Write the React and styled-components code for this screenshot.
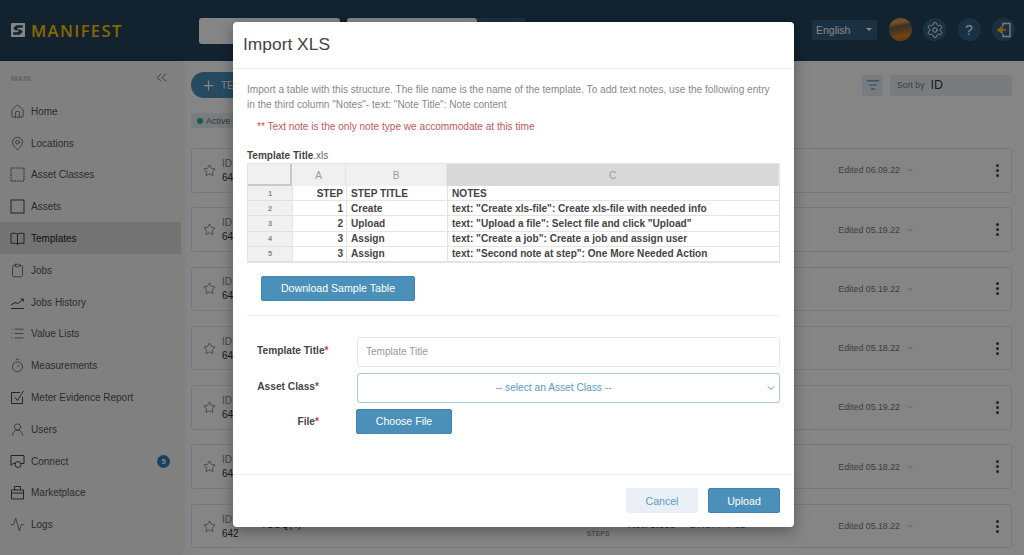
import React from 'react';
import styled, {createGlobalStyle} from 'styled-components';
import {
    House, MapPin, Clipboard, List, Timer, UserRound, Activity, ChevronsLeft, Plus, Star,
    ChevronDown, Settings, ListFilter,
} from 'lucide-react';

const Glyph = ({children}) => (
    <svg width="15" height="15" viewBox="0 0 15 15" fill="none" stroke="currentColor" strokeWidth="0.9">
        {children}
    </svg>
);

const DashedBox = () => <Glyph><rect x="1" y="1" width="13" height="13" strokeDasharray="1.6 1"/></Glyph>;
const PlainBox = () => <Glyph><rect x="1" y="1" width="13" height="13"/></Glyph>;
const OpenBook = () => <Glyph><path d="M7.5 3C6 2 3 2 1 2.500V12.500C3 12 6 12 7.500 13 9 12 12 12 14 12.500V2.500C12 2 9 2 7.500 3ZM7.500 3V14"/></Glyph>;
const History = () => <Glyph><path d="M1 10 5 7.500 8 8.500 13 4.500M10.500 4H13.500V6.500M1 13.500H14"/></Glyph>;
const MeterCheck = () => <Glyph><path d="M12.500 7V13.500H1.500V2.500H10M5 7.500 7.500 10.500 13.500 1"/></Glyph>;
const Bubbles = () => <Glyph><path d="M1 1.500H14V9.500H11M5 9.500H3L1 11.500V1.500"/><circle cx="8" cy="10.500" r="3"/></Glyph>;
const Case = () => <Glyph><path d="M1.500 5H13.500V14H1.500ZM1.500 8H13.500M4.500 5V1.500H10.500V5"/></Glyph>;

const NAV = [
    {label: 'Home', icon: House},
    {label: 'Locations', icon: MapPin},
    {label: 'Asset Classes', icon: DashedBox},
    {label: 'Assets', icon: PlainBox},
    {label: 'Templates', icon: OpenBook, active: true},
    {label: 'Jobs', icon: Clipboard},
    {label: 'Jobs History', icon: History},
    {label: 'Value Lists', icon: List},
    {label: 'Measurements', icon: Timer},
    {label: 'Meter Evidence Report', icon: MeterCheck},
    {label: 'Users', icon: UserRound},
    {label: 'Connect', icon: Bubbles, badge: 5},
    {label: 'Marketplace', icon: Case},
    {label: 'Logs', icon: Activity},
];

const ROWS = [
    {date: '06.09.22'},
    {date: '05.19.22'},
    {date: '05.19.22'},
    {date: '05.18.22'},
    {date: '05.19.22'},
    {date: '05.18.22'},
    {date: '05.18.22', title: 'TSOQ(4)', steps: 12, rev: 'Rev. 3.000', owner: 'DROPPY 02'},
];

const SHEET = [
    ['1', 'STEP', 'STEP TITLE', 'NOTES'],
    ['2', '1', 'Create', 'text: "Create xls-file": Create xls-file with needed info'],
    ['3', '2', 'Upload', 'text: "Upload a file": Select file and click "Upload"'],
    ['4', '3', 'Assign', 'text: "Create a job": Create a job and assign user'],
    ['5', '3', 'Assign', 'text: "Second note at step": One More Needed Action'],
];

const App = () => (
    <>
        <GlobalStyle/>
        <Page>
            <Header>
                <Logo>
                    <LogoMark viewBox="0 0 16 16">
                        <rect width="16" height="16" rx="1" fill="#fff"/>
                        <path d="M13.500 2.500H6L2.500 6 5 8.500H9.500L7.500 10.500H2.500V13.500H10L13.500 10 11 7.500H6.500L8.500 5.500H13.500Z" fill="#24415a"/>
                    </LogoMark>
                    MANIFEST
                </Logo>
                <HeaderSearch>
                    <SearchField $width={141}/>
                    <SearchField $width={130}/>
                    <SearchButton/>
                </HeaderSearch>
                <HeaderRight>
                    <LangSelect>English<Caret/></LangSelect>
                    <Avatar/>
                    <RoundButton><Settings size={18} strokeWidth={1.3}/></RoundButton>
                    <RoundButton>?</RoundButton>
                    <RoundButton>
                        <svg width="18" height="18" viewBox="0 0 18 18" fill="none">
                            <path d="M8 5V2.500H15V15.500H8V13" stroke="#f0f0f0" strokeWidth="1.4"/>
                            <path d="M11 9H5M7 6 3 9 7 12Z" stroke="#ffb020" strokeWidth="1.6" fill="#ffb020"/>
                        </svg>
                    </RoundButton>
                </HeaderRight>
            </Header>
            <Body>
                <Sidebar>
                    <SideTop>
                        <SideTitle>MAIN</SideTitle>
                        <ChevronsLeft size={17} strokeWidth={1}/>
                    </SideTop>
                    {NAV.map(({label, icon: Icon, active, badge}) => (
                        <NavItem key={label} $active={active}>
                            <IconSlot><Icon size={15} strokeWidth={1}/></IconSlot>
                            <span>{label}</span>
                            {badge && <Badge>{badge}</Badge>}
                        </NavItem>
                    ))}
                </Sidebar>
                <Main>
                    <Toolbar>
                        <AddButton><Plus size={15}/>TEMPLATE</AddButton>
                        <FilterButton><ListFilter size={14} color="#4a90b8"/></FilterButton>
                        <SortBox><small>Sort by</small>ID</SortBox>
                    </Toolbar>
                    <ActiveTag><Dot/>Active</ActiveTag>
                    <Rows>
                        {ROWS.map(({date, title, steps, rev, owner}, i) => (
                            <Row key={i}>
                                <Star size={13} strokeWidth={1}/>
                                <IdCell><span>ID</span><b>642</b></IdCell>
                                {title && (
                                    <>
                                        <RowTitle>{title}</RowTitle>
                                        <Steps><b>{steps}</b><span>STEPS</span></Steps>
                                        <Revision>{rev}</Revision>
                                        <Owner>{owner}</Owner>
                                    </>
                                )}
                                <Edited>Edited {date}<ChevronDown size={10} strokeWidth={1.2}/></Edited>
                                <MenuDots><i/><i/><i/></MenuDots>
                            </Row>
                        ))}
                    </Rows>
                </Main>
            </Body>
            <Overlay>
                <Modal>
                    <ModalTitle>Import XLS</ModalTitle>
                    <ModalBody>
                        <Intro>
                            Import a table with this structure. The file name is the name of the template. To add text notes, use the following entry
                            in the third column "Notes"- text: "Note Title": Note content
                        </Intro>
                        <Warning>** Text note is the only note type we accommodate at this time</Warning>
                        <FileName><b>Template Title</b>.xls</FileName>
                        <Sheet>
                            <Corner/>
                            <ColHead>A</ColHead>
                            <ColHead>B</ColHead>
                            <ColHead $selected>C</ColHead>
                            {SHEET.map(([n, step, title, notes]) => (
                                <React.Fragment key={n}>
                                    <RowHead>{n}</RowHead>
                                    <Cell $right>{step}</Cell>
                                    <Cell>{title}</Cell>
                                    <Cell>{notes}</Cell>
                                </React.Fragment>
                            ))}
                        </Sheet>
                        <DownloadButton>Download Sample Table</DownloadButton>
                        <Divider/>
                        <Form>
                            <Label>Template Title<Req>*</Req></Label>
                            <TextInput placeholder="Template Title"/>
                            <Label>Asset Class<Req>*</Req></Label>
                            <SelectBox>
                                -- select an Asset Class --
                                <SelectChevron><ChevronDown size={12} strokeWidth={2}/></SelectChevron>
                            </SelectBox>
                            <Label $low>File<Req>*</Req></Label>
                            <ChooseButton>Choose File</ChooseButton>
                        </Form>
                    </ModalBody>
                    <ModalFooter>
                        <CancelButton>Cancel</CancelButton>
                        <UploadButton>Upload</UploadButton>
                    </ModalFooter>
                </Modal>
            </Overlay>
        </Page>
    </>
);

export default App;

const GlobalStyle = createGlobalStyle`
    html, body {
        margin: 0;
        padding: 0;
        overflow: hidden;
    }
    * {
        box-sizing: border-box;
    }
    body {
        font-family: "Liberation Sans", Arial, sans-serif;
    }
`;

const Page = styled.div`
    position: relative;
    width: 1024px;
    height: 555px;
    overflow: hidden;
    background: #fff;
`;

const Header = styled.div`
    display: flex;
    align-items: center;
    height: 61px;
    padding: 0 9px 0 11px;
    background: #24415a;
`;

const Logo = styled.div`
    display: flex;
    align-items: center;
    gap: 6px;
    width: 188px;
    margin-top: -1px;
    color: #ffc800;
    font-family: "Open Sans", sans-serif;
    font-size: 16.5px;
    font-weight: 600;
    letter-spacing: 1.4px;
`;

const LogoMark = styled.svg`
    width: 14px;
    height: 14px;
`;

const HeaderSearch = styled.div`
    display: flex;
    gap: 7px;
`;

const SearchField = styled.div`
    width: ${p => p.$width}px;
    height: 26px;
    border-radius: 3px;
    background: #fff;
`;

const SearchButton = styled.div`
    width: 48px;
    height: 26px;
    margin-left: -7px;
    background: #32617f;
`;

const HeaderRight = styled.div`
    display: flex;
    align-items: center;
    gap: 11.5px;
    margin-left: auto;
    margin-top: -2px;
`;

const LangSelect = styled.div`
    display: flex;
    align-items: center;
    justify-content: space-between;
    width: 65px;
    height: 20px;
    padding: 0 5px 0 4px;
    border-radius: 2px;
    background: #325f82;
    color: #fff;
    font-size: 10.5px;
`;

const Caret = styled.i`
    border-left: 3px solid transparent;
    border-right: 3px solid transparent;
    border-top: 3px solid #fff;
`;

const Avatar = styled.div`
    width: 23px;
    height: 23px;
    border-radius: 50%;
    background: linear-gradient(170deg, #e09a45 0 22%, #6d5f4c 38%, #8a6a40 52%, #d27f2a 75%, #b36a1e 100%);
`;

const RoundButton = styled.div`
    display: flex;
    align-items: center;
    justify-content: center;
    width: 23px;
    height: 23px;
    border-radius: 50%;
    background: #325f82;
    color: #fff;
    font-size: 14px;
`;

const Body = styled.div`
    display: flex;
    height: 494px;
`;

const Sidebar = styled.div`
    flex: none;
    width: 181px;
    padding-top: 6px;
    background: #f6f6f6;
    box-shadow: 2px 0 5px rgba(0, 0, 0, .07);
`;

const SideTop = styled.div`
    display: flex;
    align-items: center;
    justify-content: space-between;
    height: 20px;
    margin-bottom: 8px;
    padding: 0 11px 0 11px;
    color: #333;
`;

const SideTitle = styled.div`
    margin-top: 3px;
    color: #bbb;
    font-size: 7.8px;
    font-weight: 700;
`;

const NavItem = styled.div`
    display: flex;
    align-items: center;
    gap: 5px;
    height: 31.8px;
    padding: 1px 11px 0 10px;
    background: ${p => p.$active ? '#dcdcdc' : 'transparent'};
    color: ${p => p.$active ? '#222' : '#555'};
    font-size: 10px;
`;

const IconSlot = styled.span`
    display: flex;
    flex: none;
    width: 16px;
    color: #333;
`;

const Badge = styled.span`
    display: flex;
    align-items: center;
    justify-content: center;
    width: 13px;
    height: 13px;
    margin-left: auto;
    border-radius: 50%;
    background: #2f80b8;
    color: #fff;
    font-size: 7.5px;
    font-weight: 700;
`;

const Main = styled.div`
    flex: 1;
    min-width: 0;
    padding: 11px 12px 0 10px;
`;

const Toolbar = styled.div`
    display: flex;
    align-items: center;
    height: 26px;
`;

const AddButton = styled.div`
    display: flex;
    align-items: center;
    gap: 5px;
    width: 120px;
    height: 26px;
    padding-left: 10px;
    border-radius: 13px;
    background: #4a90b8;
    color: #fff;
    font-size: 10px;
`;

const FilterButton = styled.div`
    display: flex;
    align-items: center;
    justify-content: center;
    width: 21px;
    height: 21px;
    margin-left: auto;
    border-radius: 2px;
    background: #e6eef4;
`;

const SortBox = styled.div`
    display: flex;
    align-items: center;
    gap: 6px;
    width: 122px;
    height: 21px;
    margin-left: 7px;
    padding-left: 7px;
    border-radius: 2px;
    background: #e6eef4;
    color: #333;
    font-size: 12.5px;
    small {
        color: #777;
        font-size: 8.7px;
    }
`;

const ActiveTag = styled.div`
    display: flex;
    align-items: center;
    gap: 3px;
    width: 60px;
    height: 15px;
    margin-top: 15px;
    padding-left: 6px;
    border-radius: 2px;
    background: #e6eef4;
    color: #666;
    font-size: 9px;
`;

const Dot = styled.i`
    width: 6px;
    height: 6px;
    border-radius: 50%;
    background: #2fb56e;
`;

const Rows = styled.div`
    display: flex;
    flex-direction: column;
    gap: 14.8px;
    margin-top: 20px;
`;

const Row = styled.div`
    display: flex;
    align-items: center;
    height: 44.5px;
    padding: 0 8px 0 11px;
    border: 1px solid #dce7f0;
    border-radius: 3px;
    background: #fff;
    color: #333;
`;

const IdCell = styled.div`
    display: flex;
    flex-direction: column;
    gap: 3px;
    margin-left: 6px;
    font-size: 10px;
    span {
        color: #888;
    }
    b {
        font-weight: 400;
    }
`;

const RowTitle = styled.div`
    width: 326px;
    margin: -3px 0 0 22px;
    font-size: 10px;
`;

const Steps = styled.div`
    display: flex;
    flex-direction: column;
    width: 41px;
    gap: 3px;
    font-size: 10px;
    b {
        font-weight: 400;
    }
    span {
        color: #777;
        font-size: 7px;
    }
`;

const Revision = styled.div`
    width: 62px;
    margin-top: -3px;
    font-size: 10px;
`;

const Owner = styled.div`
    margin-top: -3px;
    color: #2f6f9f;
    font-size: 10px;
`;

const Edited = styled.div`
    display: flex;
    align-items: center;
    gap: 5px;
    margin-left: auto;
    margin-right: 81px;
    color: #777;
    font-size: 8.8px;
`;

const MenuDots = styled.div`
    display: flex;
    flex-direction: column;
    gap: 2px;
    margin: 0 4px 0 0;
    i {
        width: 3px;
        height: 3px;
        border-radius: 50%;
        background: #444;
    }
`;

const Overlay = styled.div`
    position: absolute;
    inset: 0;
    background: rgba(0, 0, 0, .48);
`;

const Modal = styled.div`
    position: absolute;
    top: 22px;
    left: 233px;
    display: flex;
    flex-direction: column;
    width: 561px;
    height: 505px;
    border-radius: 4px;
    background: #fff;
    box-shadow: 0 4px 14px rgba(0, 0, 0, .35);
`;

const ModalTitle = styled.div`
    display: flex;
    align-items: center;
    height: 47px;
    padding: 0 0 2px 10px;
    border-bottom: 1px solid #eee;
    color: #444;
    font-size: 17.4px;
`;

const ModalBody = styled.div`
    flex: 1;
    padding: 14px 14px 0;
`;

const Intro = styled.div`
    color: #888;
    font-size: 10.1px;
    line-height: 14.5px;
`;

const Warning = styled.div`
    margin-top: 9px;
    padding-left: 10px;
    color: #c4575b;
    font-size: 10.1px;
`;

const FileName = styled.div`
    margin-top: 18px;
    color: #666;
    font-size: 10px;
    b {
        color: #444;
    }
`;

const Sheet = styled.div`
    display: grid;
    grid-template-columns: 44px 54px 101px 1fr;
    grid-template-rows: 22px repeat(5, 15.2px);
    margin-top: 2px;
    border: 1px solid #e4e4e4;
`;

const Corner = styled.div`
    background: #f0f0f0;
    border-right: 2px solid #c8c8c8;
    border-bottom: 2px solid #c8c8c8;
`;

const ColHead = styled.div`
    display: flex;
    align-items: center;
    justify-content: center;
    background: ${p => p.$selected ? '#d8d8d8' : '#f0f0f0'};
    border-right: 1px solid #e4e4e4;
    color: #999;
    font-size: 10px;
`;

const RowHead = styled.div`
    display: flex;
    align-items: center;
    justify-content: center;
    background: #f0f0f0;
    border-bottom: 1px solid #e0e0e0;
    color: #888;
    font-size: 7.5px;
    font-weight: 700;
`;

const Cell = styled.div`
    display: flex;
    align-items: center;
    justify-content: ${p => p.$right ? 'flex-end' : 'flex-start'};
    padding: 0 3px 0 4px;
    border-left: 1px solid #e4e4e4;
    border-bottom: 1px solid #e4e4e4;
    color: #444;
    font-size: 10.1px;
    font-weight: 700;
    white-space: nowrap;
`;

const BlueButton = styled.button`
    border: 1px solid #4285ac;
    border-radius: 2px;
    background: #4a90b8;
    color: #fff;
    font-family: inherit;
    font-size: 10.6px;
`;

const DownloadButton = styled(BlueButton)`
    display: block;
    width: 154px;
    height: 25px;
    margin: 13px 0 0 14px;
`;

const Divider = styled.div`
    height: 1px;
    margin-top: 14px;
    background: #f0f0f0;
`;

const Form = styled.div`
    display: grid;
    grid-template-columns: 62px 1fr;
    grid-template-rows: 30px 30px 25px;
    column-gap: 38px;
    row-gap: 6px;
    align-items: center;
    margin-top: 21px;
    padding-left: 10px;
`;

const Label = styled.div`
    padding-bottom: ${p => p.$low ? 0 : 2}px;
    color: #444;
    font-size: 10.2px;
    font-weight: 700;
    text-align: right;
    white-space: nowrap;
`;

const Req = styled.span`
    color: #c0454a;
`;

const TextInput = styled.input`
    height: 30px;
    padding: 0 8px;
    border: 1px solid #e6e6e6;
    border-radius: 3px;
    font-family: inherit;
    font-size: 10px;
    &::placeholder {
        color: #999;
    }
`;

const SelectBox = styled.div`
    position: relative;
    display: flex;
    align-items: center;
    justify-content: center;
    height: 30px;
    padding-right: 30px;
    border: 1px solid #a9c8dc;
    border-radius: 3px;
    color: #5a9bc2;
    font-size: 10.2px;
`;

const SelectChevron = styled.span`
    position: absolute;
    top: 8px;
    right: 2px;
`;

const ChooseButton = styled(BlueButton)`
    width: 96px;
    height: 25px;
    margin-left: -1px;
`;

const ModalFooter = styled.div`
    display: flex;
    justify-content: flex-end;
    gap: 10px;
    height: 53px;
    padding: 13px 14px 0 0;
    border-top: 1px solid #eee;
`;

const CancelButton = styled.button`
    width: 72px;
    height: 25px;
    border: 0;
    border-radius: 2px;
    background: #e9eff4;
    color: #5a9bc2;
    font-family: inherit;
    font-size: 10.6px;
`;

const UploadButton = styled(BlueButton)`
    width: 72px;
    height: 25px;
`;
